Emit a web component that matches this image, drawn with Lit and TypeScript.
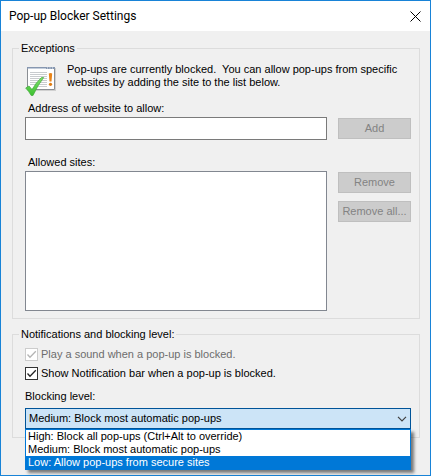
import { LitElement, html, css, svg } from "lit";
import { customElement, state } from "lit/decorators.js";
import { classMap } from "lit/directives/class-map.js";

interface Level {
  id: string;
  label: string;
}

const LEVELS: Level[] = [
  { id: "high", label: "High: Block all pop-ups (Ctrl+Alt to override)" },
  { id: "medium", label: "Medium: Block most automatic pop-ups" },
  { id: "low", label: "Low: Allow pop-ups from secure sites" },
];

@customElement("app-root")
export class AppRoot extends LitElement {
  @state() private level = "medium";
  @state() private active = "low";
  @state() private open = true;

  static styles = css`
    :host {
      display: block;
      font: 11px/13px "Liberation Sans", Arial, sans-serif;
      color: #000;
    }
    * {
      box-sizing: border-box;
    }
    .window {
      min-height: 100vh;
      border: 1px solid #1883d7;
      background: #f0f0f0;
    }
    .titlebar {
      display: flex;
      align-items: center;
      justify-content: space-between;
      height: 30px;
      padding: 0 8px;
      background: #fff;
    }
    .title {
      margin: 0;
      font: 12px/16px Roboto, "Noto Sans", sans-serif;
    }
    .close {
      display: flex;
      padding: 0 1px;
      border: 0;
      background: none;
    }
    .content {
      display: flex;
      flex-direction: column;
      gap: 9px;
      padding: 11px 10px 0 11px;
    }
    .group {
      min-width: 0;
      margin: 0;
      padding: 0;
      border: 1px solid #dcdcdc;
    }
    .legend {
      margin-left: 6px;
      padding: 0 2px;
    }
    .body {
      display: flex;
      flex-direction: column;
      padding: 8px 8px 7px 12px;
    }
    .intro {
      display: flex;
      gap: 10px;
      margin-bottom: 5px;
    }
    .intro svg {
      flex: none;
    }
    .intro p {
      margin: 0;
    }
    .label {
      padding: 0 3px;
    }
    .row {
      display: flex;
      align-items: flex-start;
      gap: 11px;
      margin-top: 2px;
    }
    .field,
    .list {
      flex: 1;
      min-width: 0;
      margin: 0;
      padding: 2px 4px;
      border: 1px solid #7a7a7a;
      border-radius: 0;
      background: #fff;
      font: inherit;
      outline: none;
    }
    .field {
      height: 23px;
    }
    .list {
      height: 140px;
      border-color: #828790;
    }
    .spaced {
      margin-top: 16px;
    }
    .buttons {
      display: flex;
      flex-direction: column;
      gap: 8px;
      padding-top: 1px;
    }
    .button {
      width: 73px;
      height: 21px;
      padding: 0;
      border: 1px solid #bfbfbf;
      background: #ccc;
      color: #838383;
      font: inherit;
      white-space: nowrap;
    }
    .group .options {
      padding: 7px 8px 8px 12px;
    }
    .check {
      display: flex;
      align-items: center;
      gap: 3px;
      margin-bottom: 6px;
    }
    .check.off {
      color: #6d6d6d;
    }
    .box {
      display: grid;
      flex: none;
      width: 13px;
      height: 13px;
    }
    .box > * {
      grid-area: 1 / 1;
    }
    .box input {
      appearance: none;
      width: 13px;
      height: 13px;
      margin: 0;
      border: 1px solid #333;
      background: #fff;
    }
    .box input:disabled {
      border-color: #ccc;
    }
    .tick {
      visibility: hidden;
      pointer-events: none;
      stroke: #222;
    }
    .box input:checked + .tick {
      visibility: visible;
    }
    .box input:disabled + .tick {
      stroke: #b4b4b4;
    }
    .combo-label {
      margin: 4px 0 5px;
    }
    .combo {
      position: relative;
      display: grid;
    }
    .select {
      appearance: none;
      grid-area: 1 / 1;
      width: 100%;
      height: 21px;
      margin: 0;
      padding: 0 20px 0 3px;
      border: 1px solid #005499;
      border-radius: 0;
      background: #cce4f7;
      color: #000;
      font: inherit;
      outline: none;
    }
    .chevron {
      grid-area: 1 / 1;
      place-self: center end;
      margin-right: 4px;
      pointer-events: none;
    }
    .menu {
      position: absolute;
      top: 100%;
      left: 0;
      right: 0;
      margin: 0;
      padding: 0;
      border: 1px solid #0078d7;
      background: #fff;
      box-shadow: 3px 3px 3px rgba(0, 0, 0, 0.5);
      list-style: none;
    }
    .option {
      padding: 0 2px;
    }
    .option.active {
      background: #0078d7;
      color: #fff;
    }
  `;

  private choose(id: string) {
    this.level = id;
    this.active = id;
    this.open = false;
  }

  private toggle(e: Event) {
    e.preventDefault();
    this.open = !this.open;
  }

  private tick() {
    return svg`<svg class="tick" width="13" height="13" viewBox="0 0 13 13" fill="none" stroke-width="1.3" aria-hidden="true">
      <path d="M2.5 6.5 5 9.2 10.8 3.3" />
    </svg>`;
  }

  private siteIcon() {
    return svg`<svg width="32" height="34" viewBox="0 0 32 34" aria-hidden="true">
      <defs>
        <linearGradient id="tickFill" x1="0" y1="0" x2="0" y2="1">
          <stop offset="0" stop-color="#7fe06c" />
          <stop offset="1" stop-color="#3cc02f" />
        </linearGradient>
      </defs>
      <path d="M3 5H31V28H3Z" fill="#d0d0d0" />
      <path d="M2.500 4.500H29.500V26.500H2.500Z" fill="#fff" stroke="#8a8e93" />
      <path d="M2 4H30V6H2Z" fill="#8797b0" />
      <path d="M3 5.500H21" stroke="#c3cddb" />
      <path d="M22 5H23M24.500 5H25.500M27 5H28" stroke="#e6edf6" />
      <path d="M5 9.500H22M5 11.500H22M5 13.500H22M5 15.500H22M5 17.500H22M5 19.500H22M5 21.500H22M12 23.500H22" stroke="#c9cccf" />
      <path d="M23.800 10.500Q25.500 9.500 27.200 10.500L26.500 18.500H24.500Z" fill="#e98417" />
      <circle cx="25.500" cy="21.300" r="1.600" fill="#e07c12" />
      <path d="M.7 25 4 23 7 26.500Q11 19.500 16.500 14.500H18.700Q12.500 22.500 8 32.500H6.200Q4 28.500 .7 25Z" fill="url(#tickFill)" stroke="#43a83c" stroke-width=".7" stroke-linejoin="round" />
    </svg>`;
  }

  render() {
    return html`
      <main class="window">
        <header class="titlebar">
          <h1 class="title">Pop-up Blocker Settings</h1>
          <button class="close" type="button" aria-label="Close">
            <svg width="11" height="11" viewBox="0 0 11 11" stroke="#000" stroke-width="1" aria-hidden="true">
              <path d="M.5.5 10.500 10.500M10.500.5.5 10.500" />
            </svg>
          </button>
        </header>
        <div class="content">
          <fieldset class="group">
            <legend class="legend">Exceptions</legend>
            <div class="body">
              <div class="intro">
                ${this.siteIcon()}
                <p>
                  Pop-ups are currently blocked.&nbsp; You can allow pop-ups from specific<br />
                  websites by adding the site to the list below.
                </p>
              </div>
              <label class="label" for="address">Address of website to allow:</label>
              <div class="row">
                <input class="field" id="address" type="text" />
                <div class="buttons">
                  <button class="button" type="button" disabled>Add</button>
                </div>
              </div>
              <label class="label spaced" for="sites">Allowed sites:</label>
              <div class="row">
                <select class="list" id="sites" size="10"></select>
                <div class="buttons">
                  <button class="button" type="button" disabled>Remove</button>
                  <button class="button" type="button" disabled>Remove all...</button>
                </div>
              </div>
            </div>
          </fieldset>
          <fieldset class="group">
            <legend class="legend">Notifications and blocking level:</legend>
            <div class="body options">
              <label class="check off">
                <span class="box"><input type="checkbox" checked disabled />${this.tick()}</span>
                Play a sound when a pop-up is blocked.
              </label>
              <label class="check">
                <span class="box"><input type="checkbox" checked />${this.tick()}</span>
                Show Notification bar when a pop-up is blocked.
              </label>
              <label class="combo-label" for="level">Blocking level:</label>
              <div class="combo">
                <select class="select" id="level" .value=${this.level} @mousedown=${this.toggle}>
                  ${LEVELS.map(
                    (l) => html`<option value=${l.id} ?selected=${l.id === this.level}>${l.label}</option>`,
                  )}
                </select>
                <svg class="chevron" width="10" height="6" viewBox="0 0 10 6" fill="none" stroke="#404040" stroke-width="1.2" aria-hidden="true">
                  <path d="M1 .8 5 4.800 9 .8" />
                </svg>
                ${this.open
                  ? html`<ul class="menu" role="listbox" aria-label="Blocking level">
                      ${LEVELS.map(
                        (l) => html`<li
                          class=${classMap({ option: true, active: l.id === this.active })}
                          role="option"
                          aria-selected=${l.id === this.level}
                          @mouseenter=${() => (this.active = l.id)}
                          @click=${() => this.choose(l.id)}
                        >${l.label}</li>`,
                      )}
                    </ul>`
                  : null}
              </div>
            </div>
          </fieldset>
        </div>
      </main>
    `;
  }
}
